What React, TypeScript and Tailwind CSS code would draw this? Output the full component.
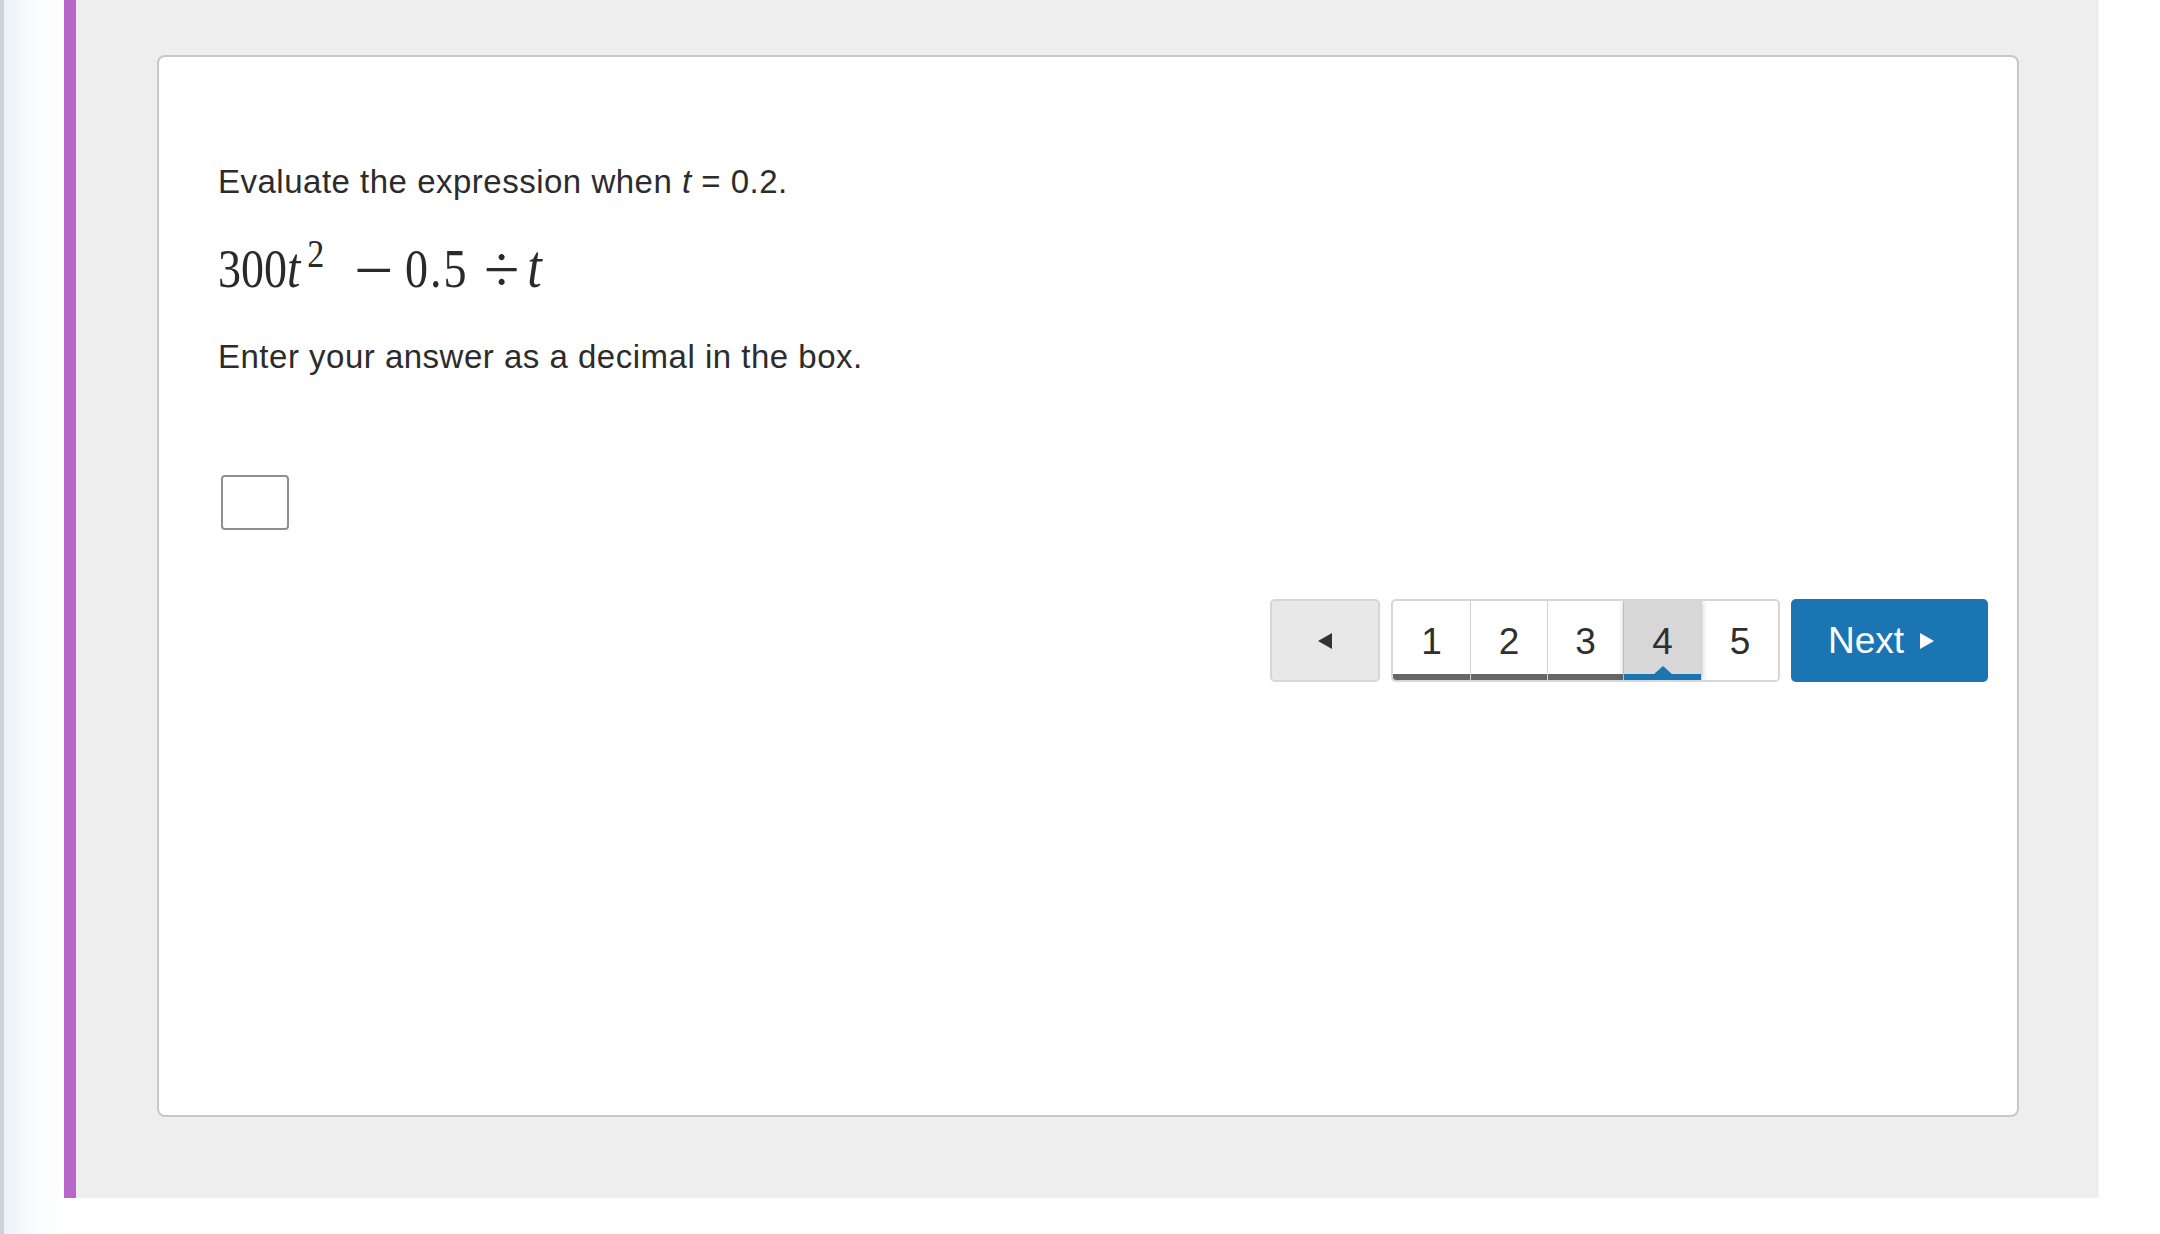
import { ReactNode } from 'react'

const PAGES = [1, 2, 3, 4, 5]
const CURRENT = 4

const CELL_W: Record<number, string> = {
  1: 'w-[78px]',
  2: 'w-[77px]',
  3: 'w-[76px]',
  4: 'w-[78px]',
  5: 'w-[76px]',
}

function PageCell({ n }: { n: number }) {
  const active = n === CURRENT
  const done = n < CURRENT
  return (
    <div
      className={
        'relative flex flex-col ' +
        CELL_W[n] +
        ' ' +
        (n < 5 ? 'border-r border-[#d2d2d2] ' : '') +
        (active ? 'bg-[#d7d7d7] shadow-[0_0_6px_rgba(0,0,0,0.25)] z-10' : 'bg-white')
      }
    >
      <div className="flex-1 flex items-center justify-center pt-[9px] text-[37px] text-[#2f2f2f]">{n}</div>
      <div className={'h-[6px] ' + (active ? 'bg-[#1b75b3]' : done ? 'bg-[#666666]' : 'bg-transparent')} />
      {active && (
        <svg className="absolute bottom-[5px] left-1/2 -translate-x-1/2" width="20" height="9" viewBox="0 0 20 9">
          <path d="M0 9 L10 0 L20 9 Z" fill="#1b75b3" />
        </svg>
      )}
    </div>
  )
}

function Line({ children, className }: { children: ReactNode; className?: string }) {
  return (
    <p className={'text-[33px] leading-[38px] tracking-[0.5px] text-[#2c2c2c] ' + (className ?? '')}>{children}</p>
  )
}

export default function App() {
  return (
    <div className="flex w-[2160px] h-[1234px] bg-white font-['Liberation_Sans',Arial,sans-serif] overflow-hidden">
      <div className="w-[4px] h-full bg-[#cbd3db]" />
      <div className="w-[60px] h-full bg-linear-to-r from-[#eef2f6] via-[#fafbfc] to-white" />
      <div className="flex h-[1198px]">
        <div className="w-[12px] h-full bg-[#b766ca]" />
        <div className="w-[2023px] h-full bg-[#eeeeee] pt-[55px] pl-[81px] border-r border-[#f4f4f4]">
          <div className="w-[1862px] h-[1062px] bg-white border-2 border-[#c8c8c8] rounded-[8px] pt-[106px] pl-[59px] pr-[29px] flex flex-col">
            <Line>
              Evaluate the expression when <i>t</i> = 0.2.
            </Line>

            {/* 300t^2 − 0.5 ÷ t */}
            <div className="mt-[39px] h-[60px] flex items-baseline font-['Liberation_Serif','Times_New_Roman',serif] text-[46px] leading-[60px] text-[#2a2a2a] origin-bottom scale-y-[1.18]">
              <span>300</span>
              <span className="italic text-[48px]">t</span>
              <span className="text-[34px] leading-none self-start mt-[4px] ml-[7px]">2</span>
              <span className="ml-[30px] mr-[7px] inline-block origin-left scale-x-[1.25] translate-y-[4px] text-[56px]">−</span>
              <span className="ml-[12px] tracking-[2px]">0.5</span>
              <span className="ml-[16px] mr-[4px] inline-block origin-left scale-x-[1.15] translate-y-[3px] text-[56px]">÷</span>
              <span className="ml-[8px] italic text-[52px]">t</span>
            </div>

            <Line className="mt-[38px]">Enter your answer as a decimal in the box.</Line>

            <div className="mt-[99px] ml-[3px] w-[68px] h-[55px] border-2 border-[#8f8f8f] rounded-[4px] bg-white" />

            <div className="mt-[69px] flex justify-end gap-[11px]">
              <button className="w-[110px] h-[83px] flex items-center justify-center bg-[#e8e8e8] border-2 border-[#d6d6d6] rounded-[5px]">
                <svg width="14" height="16" viewBox="0 0 14 16">
                  <path d="M14 0 L14 16 L0 8 Z" fill="#333333" />
                </svg>
              </button>
              <div className="h-[83px] flex border-2 border-[#d6d6d6] rounded-[5px] overflow-hidden">
                {PAGES.map(n => (
                  <PageCell key={n} n={n} />
                ))}
              </div>
              <button className="w-[197px] h-[83px] flex items-center pl-[37px] gap-[16px] bg-[#1b75b3] rounded-[5px] text-white text-[37px]">
                <span>Next</span>
                <svg width="14" height="16" viewBox="0 0 14 16">
                  <path d="M0 0 L0 16 L14 8 Z" fill="#ffffff" />
                </svg>
              </button>
            </div>
          </div>
        </div>
      </div>
    </div>
  )
}
